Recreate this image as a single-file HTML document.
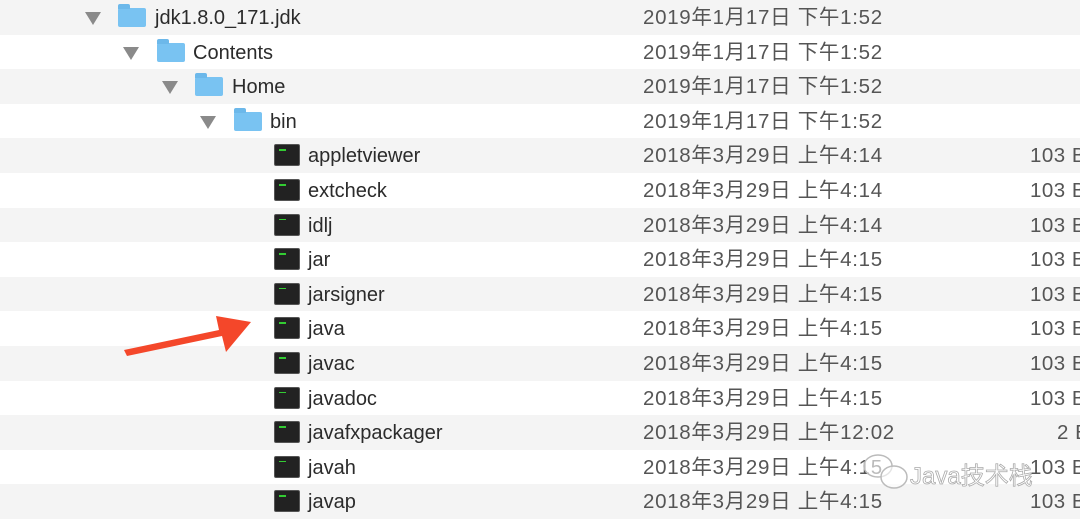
<!DOCTYPE html>
<html><head><meta charset="utf-8"><style>
body{margin:0;width:1080px;height:523px;overflow:hidden;background:#fff;font-family:"Liberation Sans","Noto Sans CJK SC",sans-serif;position:relative}
.r{position:absolute;left:0;width:1080px;height:34.6px;font-size:20px;color:#2b2b2b}
.r.g{background:#f4f4f4}
.r span{position:absolute;top:1px;line-height:34px;height:34px;white-space:nowrap}
.d{left:643px;color:#555;font-size:20.5px;letter-spacing:0.7px}
.s{left:1030px;color:#555;font-size:20.5px;letter-spacing:0.5px}
.tri{position:absolute;top:12px;width:0;height:0;border-left:8px solid transparent;border-right:8px solid transparent;border-top:13px solid #8a8a8a}
.fo{position:absolute;top:8px;width:28px;height:19px;background:#79c3f2;border-radius:2px}
.fo:before{content:"";position:absolute;left:0;top:-4px;width:12px;height:5px;background:#6cb8ea;border-radius:2px 2px 0 0}
.ex{position:absolute;left:274px;top:6px;width:26px;height:22px;background:#222;border-radius:2px;border:1px solid #555;box-sizing:border-box}
.ex:before{content:"";position:absolute;left:4px;top:4px;width:7px;height:1.5px;background:#3c3}
</style></head><body>
<div class="r g" style="top:0"><i class="tri" style="left:85px"></i><i class="fo" style="left:118px"></i><span style="left:155px">jdk1.8.0_171.jdk</span><span class="d">2019年1月17日 下午1:52</span></div>
<div class="r" style="top:34.6px"><i class="tri" style="left:123px"></i><i class="fo" style="left:157px"></i><span style="left:193px">Contents</span><span class="d">2019年1月17日 下午1:52</span></div>
<div class="r g" style="top:69.2px"><i class="tri" style="left:162px"></i><i class="fo" style="left:195px"></i><span style="left:232px">Home</span><span class="d">2019年1月17日 下午1:52</span></div>
<div class="r" style="top:103.8px"><i class="tri" style="left:200px"></i><i class="fo" style="left:234px"></i><span style="left:270px">bin</span><span class="d">2019年1月17日 下午1:52</span></div>
<div class="r g" style="top:138.4px"><i class="ex"></i><span style="left:308px">appletviewer</span><span class="d">2018年3月29日 上午4:14</span><span class="s">103 B</span></div>
<div class="r" style="top:173px"><i class="ex"></i><span style="left:308px">extcheck</span><span class="d">2018年3月29日 上午4:14</span><span class="s">103 B</span></div>
<div class="r g" style="top:207.6px"><i class="ex"></i><span style="left:308px">idlj</span><span class="d">2018年3月29日 上午4:14</span><span class="s">103 B</span></div>
<div class="r" style="top:242.2px"><i class="ex"></i><span style="left:308px">jar</span><span class="d">2018年3月29日 上午4:15</span><span class="s">103 B</span></div>
<div class="r g" style="top:276.8px"><i class="ex"></i><span style="left:308px">jarsigner</span><span class="d">2018年3月29日 上午4:15</span><span class="s">103 B</span></div>
<div class="r" style="top:311.4px"><i class="ex"></i><span style="left:308px">java</span><span class="d">2018年3月29日 上午4:15</span><span class="s">103 B</span></div>
<div class="r g" style="top:346px"><i class="ex"></i><span style="left:308px">javac</span><span class="d">2018年3月29日 上午4:15</span><span class="s">103 B</span></div>
<div class="r" style="top:380.6px"><i class="ex"></i><span style="left:308px">javadoc</span><span class="d">2018年3月29日 上午4:15</span><span class="s">103 B</span></div>
<div class="r g" style="top:415.2px"><i class="ex"></i><span style="left:308px">javafxpackager</span><span class="d">2018年3月29日 上午12:02</span><span class="s" style="left:1057px">2 B</span></div>
<div class="r" style="top:449.8px"><i class="ex"></i><span style="left:308px">javah</span><span class="d">2018年3月29日 上午4:15</span><span class="s">103 B</span></div>
<div class="r g" style="top:484.4px"><i class="ex"></i><span style="left:308px">javap</span><span class="d">2018年3月29日 上午4:15</span><span class="s">103 B</span></div>
<svg style="position:absolute;left:0;top:0" width="1080" height="523">
<polygon points="124,350 127,356 222,336 226,352 251,322 216,316 219,330" fill="#f4472a"/>
<g fill="rgba(255,255,255,0.6)" stroke="#bbb" stroke-width="1.5"><ellipse cx="878" cy="466" rx="14" ry="11"/><ellipse cx="894" cy="477" rx="13" ry="11"/></g>
<text x="910" y="484" font-size="24" fill="#fff" stroke="#aaa" stroke-width="0.8" font-family="Liberation Sans,Noto Sans CJK SC,sans-serif">Java技术栈</text>
</svg>
</body></html>
